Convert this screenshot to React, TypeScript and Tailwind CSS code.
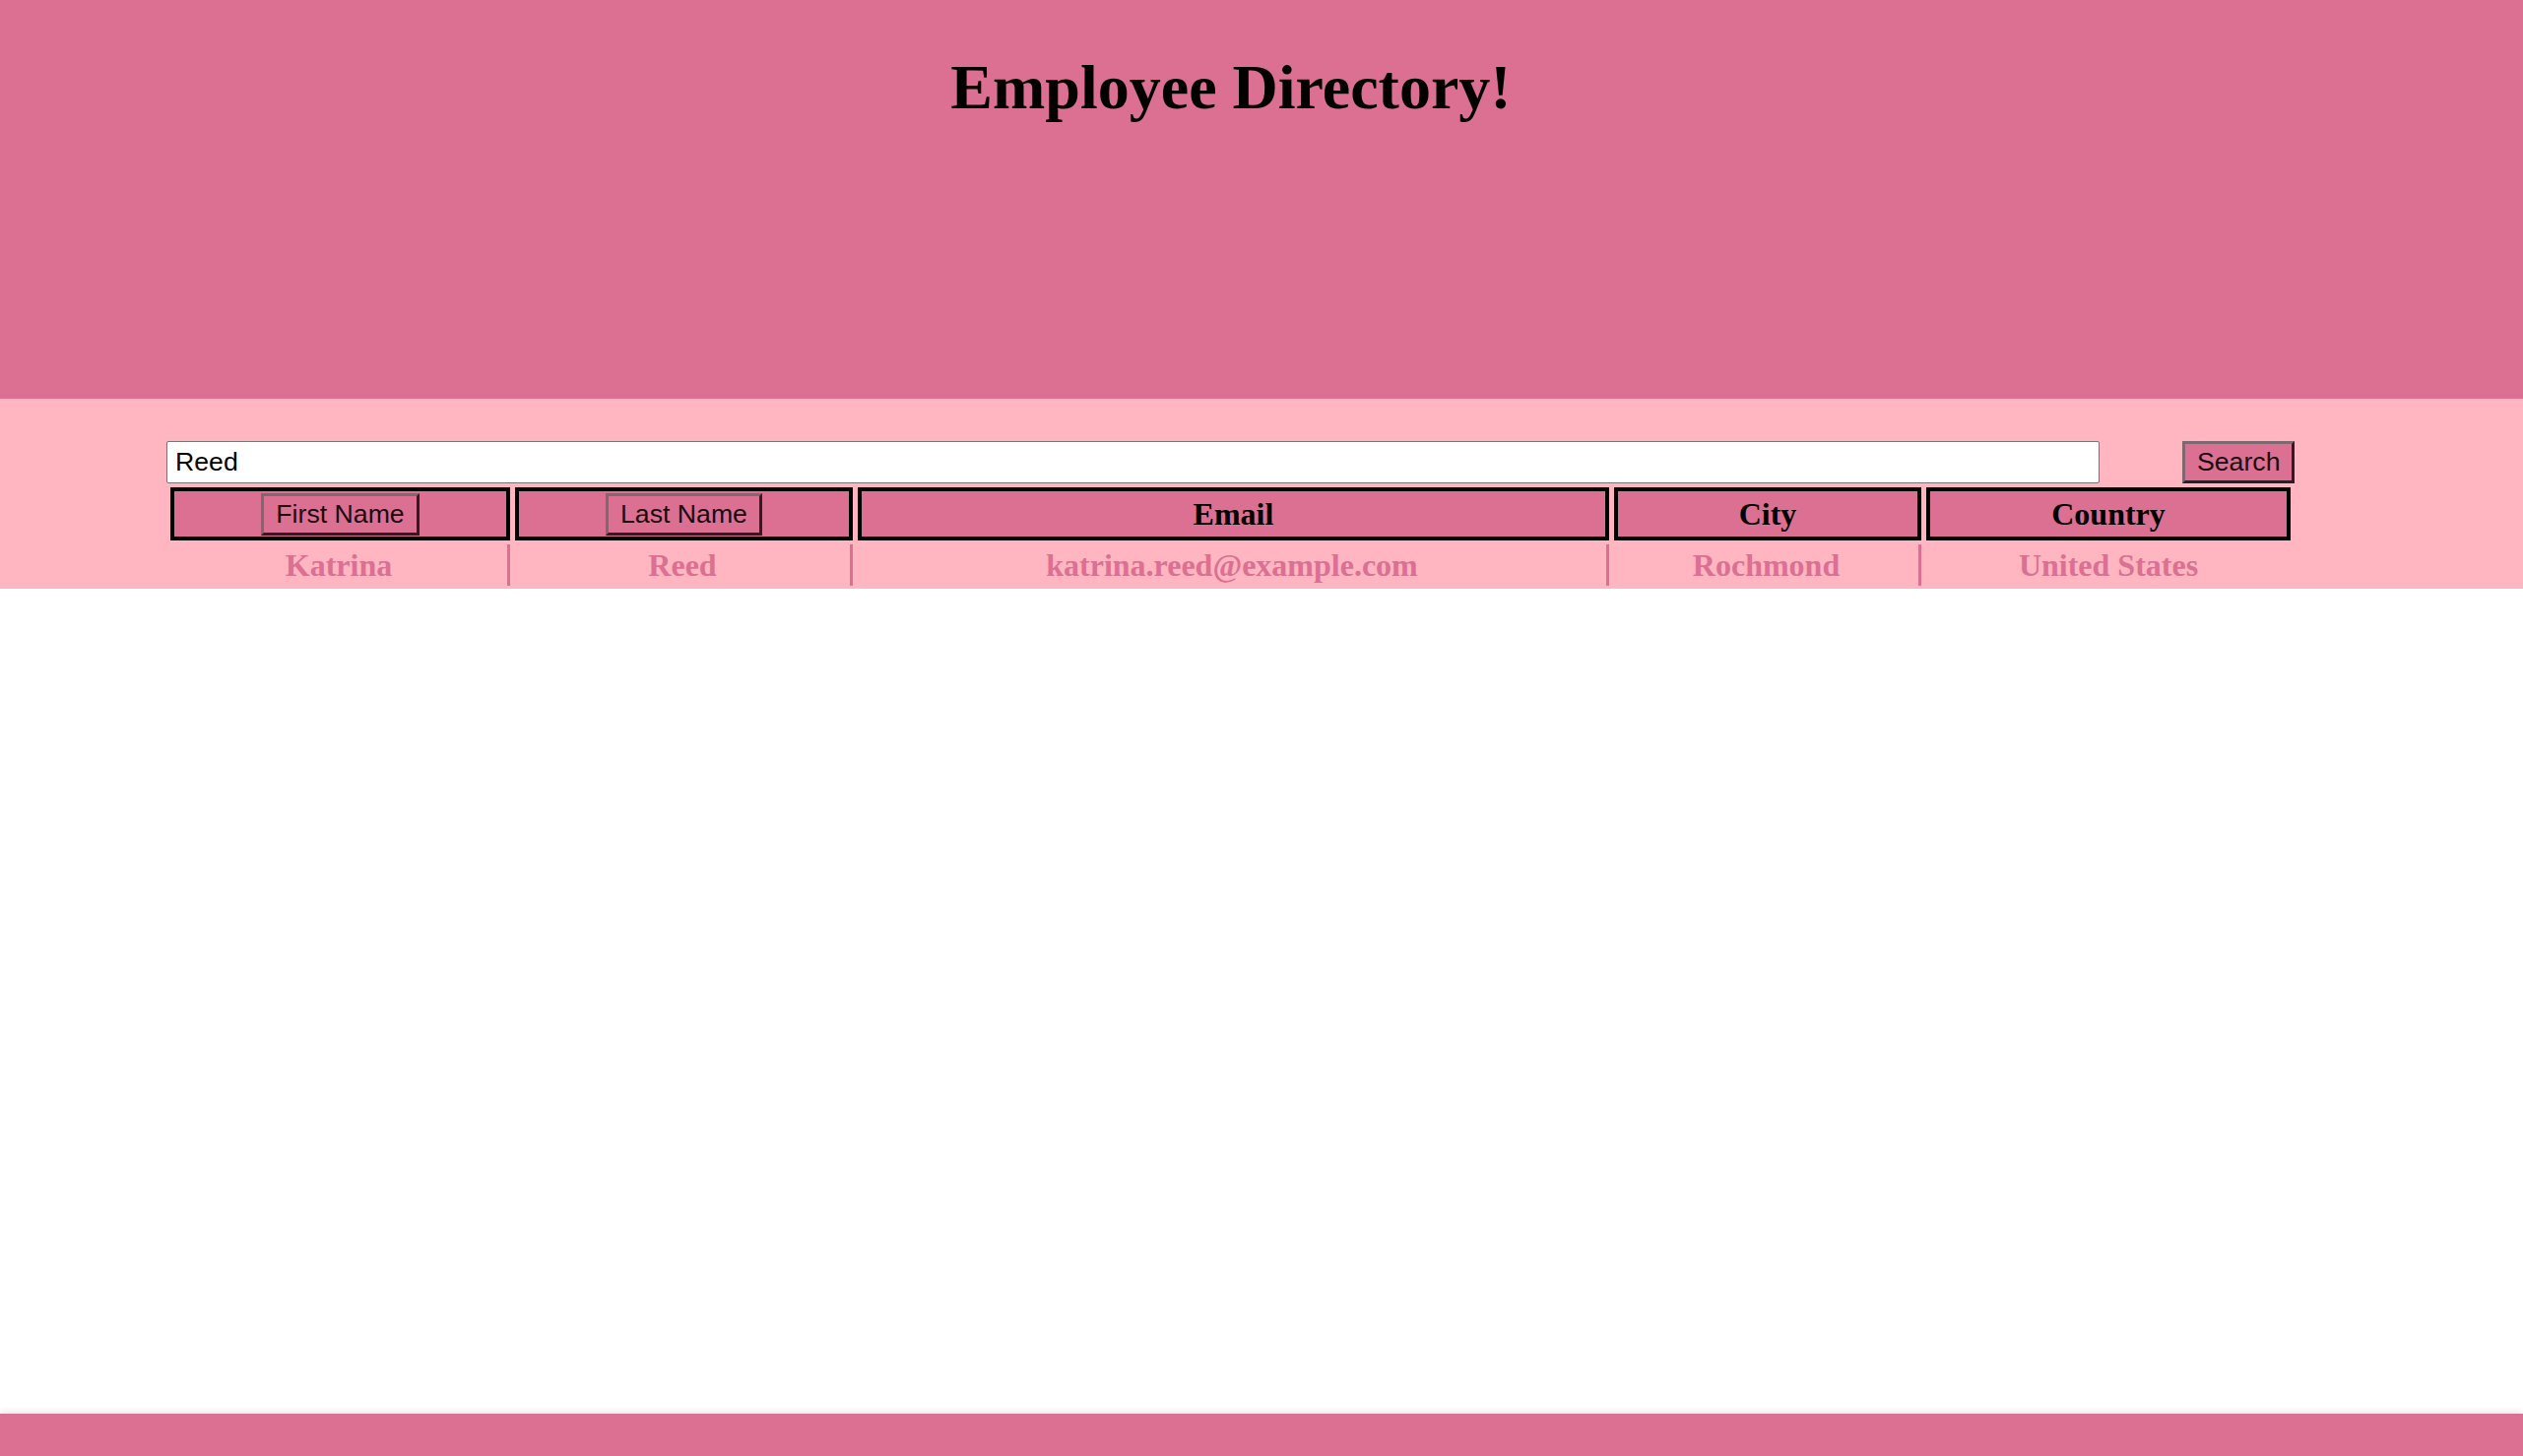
import React from 'react';

interface Employee {
  firstName: string;
  lastName: string;
  email: string;
  city: string;
  country: string;
}

const employees: Employee[] = [
  {
    firstName: 'Katrina',
    lastName: 'Reed',
    email: 'katrina.reed@example.com',
    city: 'Rochmond',
    country: 'United States',
  },
];

const serif = "font-['Liberation_Serif','Times_New_Roman',serif]";
const sans = "font-['Liberation_Sans',Arial,sans-serif]";

const btnClass = `h-[43px] px-[12px] bg-[#DB7093] text-[26.67px] leading-none text-[#1a0a10] border-[3px] border-t-[#7d6a70] border-l-[#7d6a70] border-b-[#2e1d23] border-r-[#2e1d23] ${sans}`;

const App = () => {
  const headCell = 'h-[54px] border-4 border-black bg-[#DB7093] flex items-center justify-center';
  const dataCell = `h-[42px] flex items-center justify-center text-[32px] font-bold text-[#DB7093] ${serif}`;
  const sepCell = `${dataCell} border-r-[3px] border-[#DB7093]`;

  return (
    <div className="min-h-screen flex flex-col bg-white">
      {/* Header */}
      <header className="h-[405px] bg-[#DB7093]">
        <h1 className={`mt-[52px] pr-[62px] text-center text-[64px] leading-[74px] font-bold text-black ${serif}`}>
          Employee Directory!
        </h1>
      </header>

      {/* Search + table */}
      <section className="bg-[#FFB6C1] pt-[43px] pb-[3px] pl-[169px]">
        <div className="flex items-center">
          <input
            defaultValue="Reed"
            className={`w-[1963px] h-[43px] bg-white border border-[#767676] rounded-[2px] pl-[8px] text-[26.67px] text-black outline-none ${sans}`}
          />
          <button className={`ml-[84px] ${btnClass}`}>Search</button>
        </div>

        <div className="mt-[4px] ml-[4px] grid grid-cols-[345px_343px_763px_312px_370px] gap-x-[5px] gap-y-[4px]">
          <div className={headCell}>
            <button className={btnClass}>First Name</button>
          </div>
          <div className={headCell}>
            <button className={btnClass}>Last Name</button>
          </div>
          <div className={headCell}>
            <span className={`text-[32px] font-bold text-black ${serif}`}>Email</span>
          </div>
          <div className={headCell}>
            <span className={`text-[32px] font-bold text-black ${serif}`}>City</span>
          </div>
          <div className={headCell}>
            <span className={`text-[32px] font-bold text-black ${serif}`}>Country</span>
          </div>

          {employees.map((emp) => (
            <React.Fragment key={emp.email}>
              <div className={sepCell}>{emp.firstName}</div>
              <div className={sepCell}>{emp.lastName}</div>
              <div className={sepCell}>{emp.email}</div>
              <div className={sepCell}>{emp.city}</div>
              <div className={dataCell}>{emp.country}</div>
            </React.Fragment>
          ))}
        </div>
      </section>

      <main className="flex-1" />

      {/* Footer */}
      <footer className="h-[43px] bg-[#DB7093] shadow-[0_-3px_6px_rgba(0,0,0,0.08)]" />
    </div>
  );
};

export default App;
